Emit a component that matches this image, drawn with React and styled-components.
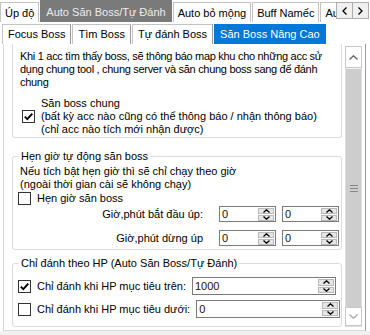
import React from "react";
import styled, { createGlobalStyle } from "styled-components";

const GlobalStyle = createGlobalStyle`
  html, body {
    margin: 0;
    padding: 0;
    background: #fff;
  }
  body {
    font-family: "Liberation Sans", Arial, sans-serif;
    font-size: 11px;
    color: #000;
  }
`;

const Window = styled.div`
  width: 370px;
  height: 335px;
  background: #fff;
  display: flex;
  flex-direction: column;
  overflow: hidden;
`;

const TopStrip = styled.div`
  display: flex;
  height: 22px;
  flex: none;
`;

const TopTabs = styled.div`
  display: flex;
  align-items: flex-end;
  flex: 1;
  overflow: hidden;
  white-space: nowrap;
`;

const TopTab = styled.div`
  height: ${({ $active }) => ($active ? "22px" : "20px")};
  line-height: ${({ $active }) => ($active ? "22px" : "20px")};
  padding: 0 ${({ $active }) => ($active ? "5px" : "4px")};
  box-sizing: border-box;
  border: 1px solid ${({ $active }) => ($active ? "#7a7a7a" : "#c4c4c4")};
  border-bottom: none;
  margin-right: 1px;
  background: ${({ $active }) => ($active ? "#7a7a7a" : "#fff")};
  color: ${({ $active }) => ($active ? "#ececec" : "#000")};
  flex: none;
`;

const ArrowPair = styled.div`
  display: flex;
  margin: 2px 1px 0 0;
  height: 17px;
`;

const ArrowBtn = styled.div`
  width: 17px;
  height: 17px;
  box-sizing: border-box;
  border: 1px solid #adadad;
  margin-left: -1px;
  background: #f0f0f0;
  display: flex;
  align-items: center;
  justify-content: center;
`;

const SubStrip = styled.div`
  display: flex;
  align-items: flex-end;
  height: 22px;
  padding-left: 2px;
  flex: none;
  white-space: nowrap;
`;

const SubTab = styled.div`
  height: 20px;
  line-height: 19px;
  padding: 0 5px;
  box-sizing: border-box;
  border: 1px solid ${({ $active }) => ($active ? "#0078d7" : "#c4c4c4")};
  border-bottom: none;
  border-right-color: ${({ $active }) => ($active ? "#0078d7" : "#9a9a9a")};
  background: ${({ $active }) => ($active ? "#0078d7" : "#fff")};
  color: ${({ $active }) => ($active ? "#fff" : "#000")};
  margin-right: 1px;
`;

const Page = styled.div`
  display: flex;
  height: 286px;
  flex: none;
  margin: 0 4px 0 3px;
  border-left: 1px solid #dadada;
  border-right: 1px solid #9b9b9b;
  border-bottom: 1px solid #dadada;
`;

const Footer = styled.div`
  flex: 1;
  background: #f0f0f0;
`;

const Content = styled.div`
  flex: 1;
  overflow: hidden;
  padding: 0 3px 0 8px;
  line-height: 13px;
`;

const CutGroup = styled.div`
  border: 1px solid #dcdcdc;
  border-top: none;
  border-radius: 0 0 3px 3px;
  padding: 6px 5px 1px 7px;
`;

const Group = styled.fieldset`
  margin: ${({ $top }) => $top}px 0 0;
  border: 1px solid #dcdcdc;
  border-radius: 3px;
  padding: ${({ $pad }) => $pad};
  min-width: 0;
`;

const Legend = styled.legend`
  padding: 0 2px;
  margin-left: 1px;
  line-height: 13px;
`;

const Para = styled.div`
  margin-left: ${({ $indent }) => $indent || 0}px;
  letter-spacing: ${({ $tight }) => ($tight ? "-0.3px" : "normal")};
`;

const CheckRow = styled.div`
  display: flex;
  align-items: center;
  gap: 6px;
  margin: ${({ $margin }) => $margin || "0"};
  height: ${({ $h }) => ($h ? `${$h}px` : "auto")};
  white-space: nowrap;
`;

const CheckBox = styled.div`
  width: 13px;
  height: 13px;
  box-sizing: border-box;
  border: 1px solid #333;
  background: #fff;
  flex: none;
  display: flex;
  align-items: center;
  justify-content: center;
`;

const SpinRow = styled.div`
  display: flex;
  align-items: center;
  justify-content: flex-end;
  gap: 6px;
  margin: ${({ $margin }) => $margin};
  padding-right: 1px;
`;

const SpinLabel = styled.span`
  margin-right: 10px;
`;

const SpinBox = styled.div`
  width: ${({ $w }) => $w}px;
  height: ${({ $h }) => $h}px;
  box-sizing: border-box;
  border: 1px solid #7a7a7a;
  background: #fff;
  display: flex;
  flex: none;
  margin-left: ${({ $auto }) => ($auto ? "auto" : "0")};
  margin-right: ${({ $mr }) => $mr || 0}px;
`;

const SpinValue = styled.div`
  flex: 1;
  padding-left: 2px;
  display: flex;
  align-items: center;
  color: #1a1200;
`;

const SpinButtons = styled.div`
  width: 16px;
  display: flex;
  flex-direction: column;
  border-left: 1px solid #fff;
  gap: 1px;
  padding: 1px 1px 1px 0;
`;

const SpinBtn = styled.div`
  flex: 1;
  background: #e5e5e5;
  border: 1px solid #b9b9b9;
  display: flex;
  align-items: center;
  justify-content: center;
`;

const HpLabel = styled.span`
  white-space: nowrap;
`;

const ScrollBar = styled.div`
  width: 17px;
  margin: 2px 3px 3px 0;
  display: flex;
  flex-direction: column;
  background: #f0f0f0;
  box-sizing: border-box;
  border: 1px solid #e0e0e0;
`;

const ScrollBtn = styled.div`
  height: ${({ $h }) => $h}px;
  flex: none;
  background: #fff;
  border: 1px solid #c8c8c8;
  margin: -1px -1px 0;
  display: flex;
  align-items: center;
  justify-content: center;
`;

const Thumb = styled.div`
  flex: 1;
  background: #cdcdcd;
  margin: 1px 0;
  display: flex;
  align-items: center;
  justify-content: center;
`;

const Chevron = ({ dir = "up", color = "#000", w = 7, h = 4 }) => {
  const paths = {
    up: `M0.5 ${h - 0.5} L${w / 2} 0.8 L${w - 0.5} ${h - 0.5}`,
    down: `M0.5 0.5 L${w / 2} ${h - 0.8} L${w - 0.5} 0.5`,
    left: `M${w - 0.5} 0.5 L1 ${h / 2} L${w - 0.5} ${h - 0.5}`,
    right: `M0.5 0.5 L${w - 1} ${h / 2} L0.5 ${h - 0.5}`,
  };
  return (
    <svg width={w} height={h} viewBox={`0 0 ${w} ${h}`}>
      <path d={paths[dir]} fill="none" stroke={color} strokeWidth="1.3" />
    </svg>
  );
};

const Check = ({ checked }) => (
  <CheckBox>
    {checked && (
      <svg width="11" height="11" viewBox="0 0 11 11">
        <path d="M1.8 5.6 L4.3 8.1 L9.3 2.6" fill="none" stroke="#000" strokeWidth="1.9" />
      </svg>
    )}
  </CheckBox>
);

const Spin = ({ value, w, h, auto, mr }) => (
  <SpinBox $w={w} $h={h} $auto={auto} $mr={mr}>
    <SpinValue>{value}</SpinValue>
    <SpinButtons>
      <SpinBtn>
        <Chevron dir="up" w={7} h={4} />
      </SpinBtn>
      <SpinBtn>
        <Chevron dir="down" w={7} h={4} />
      </SpinBtn>
    </SpinButtons>
  </SpinBox>
);

const Grip = () => (
  <svg width="8" height="7" viewBox="0 0 8 7">
    <path d="M0 0.5 H8 M0 3.5 H8 M0 6.5 H8" stroke="#8a8a8a" strokeWidth="1" />
  </svg>
);

export default function App() {
  return (
    <>
      <GlobalStyle />
      <Window>
        <TopStrip>
          <TopTabs>
            <TopTab>Úp độ</TopTab>
            <TopTab $active>Auto Săn Boss/Tự Đánh</TopTab>
            <TopTab>Auto bỏ mộng</TopTab>
            <TopTab>Buff Namếc</TopTab>
            <TopTab>Au</TopTab>
          </TopTabs>
          <ArrowPair>
            <ArrowBtn>
              <Chevron dir="left" w={5} h={8} />
            </ArrowBtn>
            <ArrowBtn>
              <Chevron dir="right" w={5} h={8} />
            </ArrowBtn>
          </ArrowPair>
        </TopStrip>

        <SubStrip>
          <SubTab>Focus Boss</SubTab>
          <SubTab>Tìm Boss</SubTab>
          <SubTab>Tự đánh Boss</SubTab>
          <SubTab $active>Săn Boss Nâng Cao</SubTab>
        </SubStrip>

        <Page>
          <Content>
            <CutGroup>
              <Para $tight>
                Khi 1 acc tìm thấy boss, sẽ thông báo map khu cho những acc sử
                dụng chung tool , chung server và săn chung boss sang để đánh
                chung
              </Para>
              <CheckRow $margin="8px 0 0 2px">
                <Check checked />
                <div>
                  Săn boss chung
                  <br />
                  (bất kỳ acc nào cũng có thể thông báo / nhận thông báo)
                  <br />
                  (chỉ acc nào tích mới nhận được)
                </div>
              </CheckRow>
            </CutGroup>

            <Group $top={12} $pad="2px 1px 3px 5px">
              <Legend>Hẹn giờ tự động săn boss</Legend>
              <Para $indent={2}>
                Nếu tích bật hẹn giờ thì sẽ chỉ chạy theo giờ
                <br />
                (ngoài thời gian cài sẽ không chạy)
              </Para>
              <CheckRow $h={12} $margin="1px 0 0">
                <Check />
                <span>Hẹn giờ săn boss</span>
              </CheckRow>
              <SpinRow $margin="2px 0 0">
                <SpinLabel>Giờ,phút bắt đầu úp:</SpinLabel>
                <Spin value="0" w={57} h={16} />
                <Spin value="0" w={57} h={16} />
              </SpinRow>
              <SpinRow $margin="8px 0 0">
                <SpinLabel>Giờ,phút dừng úp</SpinLabel>
                <Spin value="0" w={57} h={16} />
                <Spin value="0" w={57} h={16} />
              </SpinRow>
            </Group>

            <Group $top={7} $pad="7px 1px 8px 5px">
              <Legend>Chỉ đánh theo HP (Auto Săn Boss/Tự Đánh)</Legend>
              <CheckRow>
                <Check checked />
                <HpLabel>Chỉ đánh khi HP mục tiêu trên:</HpLabel>
                <Spin value="1000" w={144} h={18} auto mr={4} />
              </CheckRow>
              <CheckRow $margin="5px 0 0">
                <Check />
                <HpLabel>Chỉ đánh khi HP mục tiêu dưới:</HpLabel>
                <Spin value="0" w={144} h={18} auto mr={4} />
              </CheckRow>
            </Group>
          </Content>

          <ScrollBar>
            <ScrollBtn $h={20}>
              <Chevron dir="up" color="#606060" w={9} h={5} />
            </ScrollBtn>
            <Thumb>
              <Grip />
            </Thumb>
            <ScrollBtn $h={17}>
              <Chevron dir="down" color="#a8a8a8" w={9} h={5} />
            </ScrollBtn>
          </ScrollBar>
        </Page>
        <Footer />
      </Window>
    </>
  );
}
